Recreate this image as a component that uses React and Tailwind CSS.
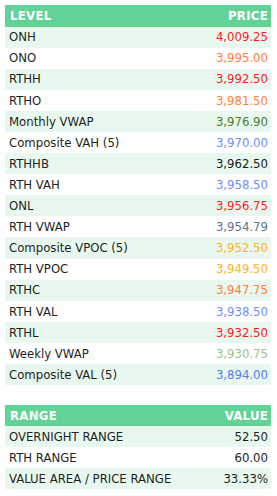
import React from 'react';

const levels = [
    { name: 'ONH', price: '4,009.25', color: 'text-[#ff1a1a]' },
    { name: 'ONO', price: '3,995.00', color: 'text-[#ff7f3a]' },
    { name: 'RTHH', price: '3,992.50', color: 'text-[#ff1a1a]' },
    { name: 'RTHO', price: '3,981.50', color: 'text-[#ff7f3a]' },
    { name: 'Monthly VWAP', price: '3,976.90', color: 'text-[#4d7a32]' },
    { name: 'Composite VAH (5)', price: '3,970.00', color: 'text-[#6d8eff]' },
    { name: 'RTHHB', price: '3,962.50', color: 'text-[#1a1a1a]' },
    { name: 'RTH VAH', price: '3,958.50', color: 'text-[#6d8eff]' },
    { name: 'ONL', price: '3,956.75', color: 'text-[#ff1a1a]' },
    { name: 'RTH VWAP', price: '3,954.79', color: 'text-[#5d7585]' },
    { name: 'Composite VPOC (5)', price: '3,952.50', color: 'text-[#ffb424]' },
    { name: 'RTH VPOC', price: '3,949.50', color: 'text-[#ffb424]' },
    { name: 'RTHC', price: '3,947.75', color: 'text-[#ff7f3a]' },
    { name: 'RTH VAL', price: '3,938.50', color: 'text-[#6d8eff]' },
    { name: 'RTHL', price: '3,932.50', color: 'text-[#ff1a1a]' },
    { name: 'Weekly VWAP', price: '3,930.75', color: 'text-[#9cbf8a]' },
    { name: 'Composite VAL (5)', price: '3,894.00', color: 'text-[#4f7dff]' },
];

const ranges = [
    { name: 'OVERNIGHT RANGE', value: '52.50' },
    { name: 'RTH RANGE', value: '60.00' },
    { name: 'VALUE AREA / PRICE RANGE', value: '33.33%' },
];

const Header = ({ left, right }) => (
    <div className="flex items-center justify-between h-[21.5px] bg-[#62d296] pl-[5px] pr-[3px] text-white font-bold text-[13px] tracking-[0.3px]">
        <span>{left}</span>
        <span>{right}</span>
    </div>
);

const Row = ({ index, name, value, color }) => (
    <div className={`flex items-center justify-between h-[21.1px] pl-[4px] pr-[3px] text-[13px] ${index % 2 === 0 ? 'bg-[#e8f8ee]' : 'bg-white'}`}>
        <span className="text-[#1e1e1e]">{name}</span>
        <span className={color}>{value}</span>
    </div>
);

export default function App() {
    return (
        <div className="w-[277px] h-[496px] bg-white pt-[5px] px-[5px] font-['DejaVu_Sans_Condensed',sans-serif]">
            <div className="w-[266px]">
                <Header left="LEVEL" right="PRICE" />
                {levels.map((l, i) => (
                    <Row key={l.name} index={i} name={l.name} value={l.price} color={l.color} />
                ))}
            </div>
            <div className="w-[266px] mt-[19.5px]">
                <Header left="RANGE" right="VALUE" />
                {ranges.map((r, i) => (
                    <Row key={r.name} index={i} name={r.name} value={r.value} color="text-[#1e1e1e]" />
                ))}
            </div>
        </div>
    );
}
